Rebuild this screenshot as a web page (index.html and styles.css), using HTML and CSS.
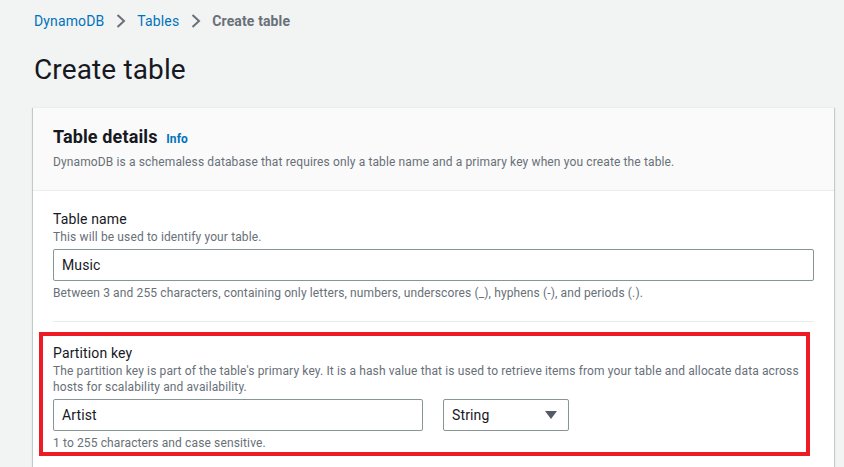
FILE: index.html
```html
<!DOCTYPE html>
<html lang="en">
<head>
<meta charset="utf-8">
<title>Create table</title>
<link rel="stylesheet" href="styles.css">
</head>
<body>
<div class="page">
  <nav class="crumbs">
    <a class="crumb-link" href="#">DynamoDB</a>
    <svg class="chev" viewBox="0 0 10 14" width="10" height="14"><path d="M1.5 1l6.5 6-6.5 6" fill="none" stroke="#687078" stroke-width="2"/></svg>
    <a class="crumb-link" href="#">Tables</a>
    <svg class="chev" viewBox="0 0 10 14" width="10" height="14"><path d="M1.5 1l6.5 6-6.5 6" fill="none" stroke="#687078" stroke-width="2"/></svg>
    <span class="crumb-current">Create table</span>
  </nav>
  <h1 class="title">Create table</h1>
  <section class="card">
    <header class="card-head">
      <h2 class="card-title">Table details <a class="info" href="#">Info</a></h2>
      <p class="card-desc">DynamoDB is a schemaless database that requires only a table name and a primary key when you create the table.</p>
    </header>
    <div class="card-body">
      <div class="field">
        <div class="label">Table name</div>
        <div class="desc">This will be used to identify your table.</div>
        <div class="input wide">Music</div>
        <div class="hint">Between 3 and 255 characters, containing only letters, numbers, underscores (_), hyphens (-), and periods (.).</div>
      </div>
      <div class="divider"></div>
      <div class="highlight">
        <div class="field">
          <div class="label">Partition key</div>
          <div class="desc">The partition key is part of the table's primary key. It is a hash value that is used to retrieve items from your table and allocate data across hosts for scalability and availability.</div>
          <div class="row">
            <div class="input key">Artist</div>
            <div class="select">String
              <svg class="caret" viewBox="0 0 12 8" width="12" height="8"><path d="M0 0h12L6 8z" fill="#545b64"/></svg>
            </div>
          </div>
          <div class="hint">1 to 255 characters and case sensitive.</div>
        </div>
      </div>
    </div>
  </section>
</div>
</body>
</html>
```
FILE: styles.css
```css
* { box-sizing: border-box; }
html, body { margin: 0; padding: 0; }
body {
  background: #f2f3f3;
  font-family: Roboto, "Liberation Sans", sans-serif;
  letter-spacing: 0.008em;
  color: #16191f;
  width: 844px;
  height: 467px;
  overflow: hidden;
}
.page { padding: 10px 10px 0 33px; }
.crumbs {
  display: flex;
  align-items: center;
  height: 22px;
  font-size: 14px;
  padding-left: 1px;
}
.crumb-link { color: #0073bb; text-decoration: none; }
.chev { margin: 0 11px 0 12px; }
.crumb-current { color: #687078; font-weight: 700; }
.title {
  margin: 20px 0 0 1px;
  font-size: 28px;
  font-weight: 400;
  line-height: 36px;
  color: #16191f;
}
.card {
  margin-top: 19px;
  background: #fff;
  border-top: 1px solid #eaeded;
  box-shadow: 0 1px 1px 0 rgba(0,28,36,.3), 1px 1px 1px 0 rgba(0,28,36,.15), -1px 1px 1px 0 rgba(0,28,36,.15);
}
.card-head {
  background: #fafafa;
  border-bottom: 1px solid #eaeded;
  padding: 18px 20px 20px;
}
.card-title {
  margin: 0;
  font-size: 18px;
  line-height: 22px;
  font-weight: 700;
}
.info {
  font-size: 12px;
  font-weight: 700;
  color: #0073bb;
  text-decoration: none;
  margin-left: 4px;
}
.card-desc {
  margin: 4px 0 0;
  font-size: 12px;
  line-height: 16px;
  color: #687078;
}
.card-body { padding: 18px 20px 20px; }
.label { font-size: 14px; line-height: 20px; }
.desc { font-size: 12px; line-height: 16px; color: #687078; }
.input, .select {
  height: 32px;
  margin-top: 4px;
  border: 1px solid #879596;
  border-radius: 2px;
  font-size: 14px;
  display: flex;
  align-items: center;
  padding: 0 8px;
  background: #fff;
}
.row { display: flex; gap: 20px; }
.key { width: 370px; }
.select {
  width: 126px;
  justify-content: space-between;
  padding-right: 11px;
}
.hint { margin-top: 4px; font-size: 12px; line-height: 16px; color: #687078; }
.divider { height: 1px; background: #eaeded; margin: 20px 0 0; }
.highlight {
  margin: 10px 4px 0 -14px;
  border: 4px solid #ed1c24;
  padding: 7px 0 1px 10px;
}
```
